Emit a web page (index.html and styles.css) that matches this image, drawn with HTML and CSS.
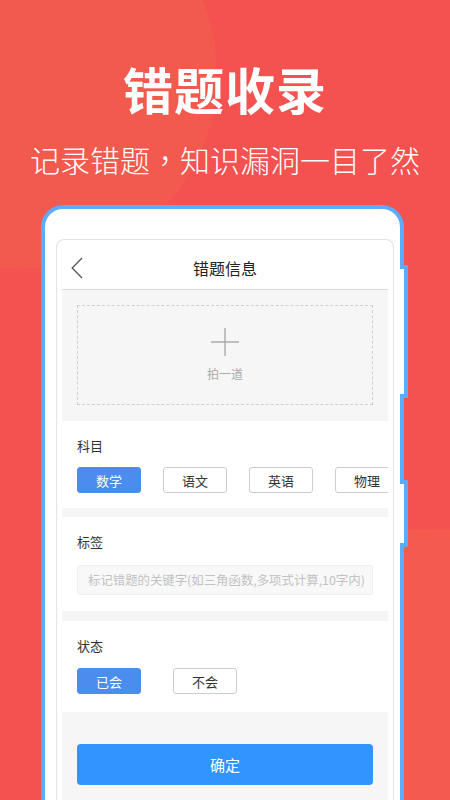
FILE: index.html
```html
<!DOCTYPE html>
<html lang="zh-CN">
<head>
<meta charset="utf-8">
<title>错题收录</title>
<link rel="stylesheet" href="styles.css">
</head>
<body>
<header class="hero">
  <h1 class="hero-title">错题收录</h1>
  <p class="hero-sub">记录错题<span class="punct" lang="zh-TW">，</span>知识漏洞一目了然</p>
</header>
<div class="phone">
  <span class="side-key side-key-1"></span>
  <span class="side-key side-key-2"></span>
  <div class="screen">
    <div class="nav">
      <span class="nav-back">
        <svg width="12" height="22" viewBox="0 0 12 22"><path d="M11 1 L1.2 11 L11 21" fill="none" stroke="#555" stroke-width="1.3"/></svg>
      </span>
      <span class="nav-title">错题信息</span>
      <span></span>
    </div>
    <div class="content">
      <div class="photo">
        <div class="photo-box">
          <svg width="28" height="28" viewBox="0 0 28 28"><path d="M14 0 V28 M0 14 H28" stroke="#aaa" stroke-width="1.4"/></svg>
          <span class="photo-text">拍一道</span>
        </div>
      </div>
      <section class="section">
        <div class="label">科目</div>
        <div class="chips chips-subject">
          <span class="chip chip-on">数学</span>
          <span class="chip">语文</span>
          <span class="chip">英语</span>
          <span class="chip">物理</span>
        </div>
      </section>
      <section class="section section-tag">
        <div class="label">标签</div>
        <input class="tag-input" type="text" placeholder="标记错题的关键字(如三角函数,多项式计算,10字内)">
      </section>
      <section class="section section-status">
        <div class="label">状态</div>
        <div class="chips chips-status">
          <span class="chip chip-on">已会</span>
          <span class="chip">不会</span>
        </div>
      </section>
      <div class="actions">
        <button class="confirm" type="button">确定</button>
      </div>
    </div>
  </div>
</div>
</body>
</html>
```
FILE: styles.css
```css
html, body {
  margin: 0;
  padding: 0;
}
body {
  width: 450px;
  height: 800px;
  overflow: hidden;
  font-family: "Noto Sans CJK SC", "Noto Sans", sans-serif;
  background:
    radial-gradient(circle 195px at 22px 74px, #f35a4e 99.6%, rgba(243,90,78,0) 100%),
    radial-gradient(circle 300px at 440px 828px, #f45b4e 99.6%, rgba(244,91,78,0) 100%),
    #f45151;
}
.hero {
  padding-top: 60px;
  text-align: center;
  color: #fff;
}
.hero-title {
  margin: 0;
  font-size: 50px;
  line-height: 56px;
  font-weight: 700;
  letter-spacing: 1px;
}
.hero-sub {
  margin: 23px 0 0;
  font-size: 30px;
  line-height: 40px;
  font-weight: 300;
}
.punct {
  font-family: "Noto Sans CJK TC", "Noto Sans CJK SC", sans-serif;
}
.phone {
  position: relative;
  box-sizing: border-box;
  margin: 26px 0 0 41px;
  width: 363px;
  height: 640px;
  border: 4px solid #5cacfc;
  border-bottom: none;
  border-radius: 22px 22px 0 0;
  background: #fff;
  padding: 30px 6px 0 11px;
}
.side-key {
  position: absolute;
  right: -8px;
  width: 8px;
  box-sizing: border-box;
  background: #fff;
  border: 4px solid #5cacfc;
  border-left: none;
  border-radius: 0 2px 2px 0;
}
.side-key-1 {
  top: 56px;
  height: 133px;
}
.side-key-2 {
  top: 271px;
  height: 67px;
}
.screen {
  height: 100%;
  box-sizing: border-box;
  border: 1px solid #e3e3e3;
  border-bottom: none;
  border-radius: 8px 8px 0 0;
  padding: 0 5px;
  background: #fff;
}
.nav {
  box-sizing: border-box;
  height: 50px;
  padding-top: 7px;
  border-bottom: 1px solid #dcdcdc;
  display: grid;
  grid-template-columns: 40px 1fr 40px;
  align-items: center;
}
.nav-back {
  display: flex;
  padding-left: 9px;
}
.nav-title {
  text-align: center;
  font-size: 16px;
  color: #222;
}
.content {
  background: #f6f6f6;
  height: 100%;
}
.photo {
  padding: 15px 15px 16px;
}
.photo-box {
  box-sizing: border-box;
  height: 100px;
  border: 1px dashed #cfcfcf;
  display: flex;
  flex-direction: column;
  align-items: center;
  justify-content: center;
  gap: 9px;
}
.photo-text {
  font-size: 12px;
  line-height: 18px;
  color: #aaa;
}
.section {
  background: #fff;
  padding: 16px 15px 15px;
  overflow: hidden;
}
.section-tag {
  margin-top: 9px;
  padding-bottom: 16px;
}
.section-status {
  margin-top: 10px;
  padding-bottom: 18px;
}
.label {
  font-size: 13px;
  line-height: 18px;
  color: #333;
}
.chips {
  display: flex;
  margin-top: 12px;
}
.chips-subject {
  gap: 22px;
}
.chips-status {
  gap: 32px;
  margin-top: 13px;
}
.chip {
  flex: none;
  box-sizing: border-box;
  width: 64px;
  height: 26px;
  border: 1px solid #cdcdcd;
  border-radius: 3px;
  display: flex;
  align-items: center;
  justify-content: center;
  font-size: 13px;
  color: #333;
  background: #fff;
}
.chip-on {
  background: #4a8def;
  border-color: #4a8def;
  color: #fff;
}
.tag-input {
  display: block;
  margin: 14px 0 0;
  box-sizing: border-box;
  width: 100%;
  height: 30px;
  padding: 0 2px 0 10px;
  border: 1px solid #efefef;
  border-radius: 3px;
  background: #f8f8f8;
  font-family: "Noto Sans CJK SC", "Noto Sans", sans-serif;
  font-size: 12.4px;
  color: #333;
  outline: none;
}
.tag-input::placeholder {
  color: #c2c2c2;
}
.actions {
  padding: 32px 15px 0;
}
.confirm {
  display: block;
  width: 100%;
  height: 41px;
  border: none;
  border-radius: 4px;
  background: #3095ff;
  color: #fff;
  font-family: "Noto Sans CJK SC", "Noto Sans", sans-serif;
  font-size: 15px;
}
```
